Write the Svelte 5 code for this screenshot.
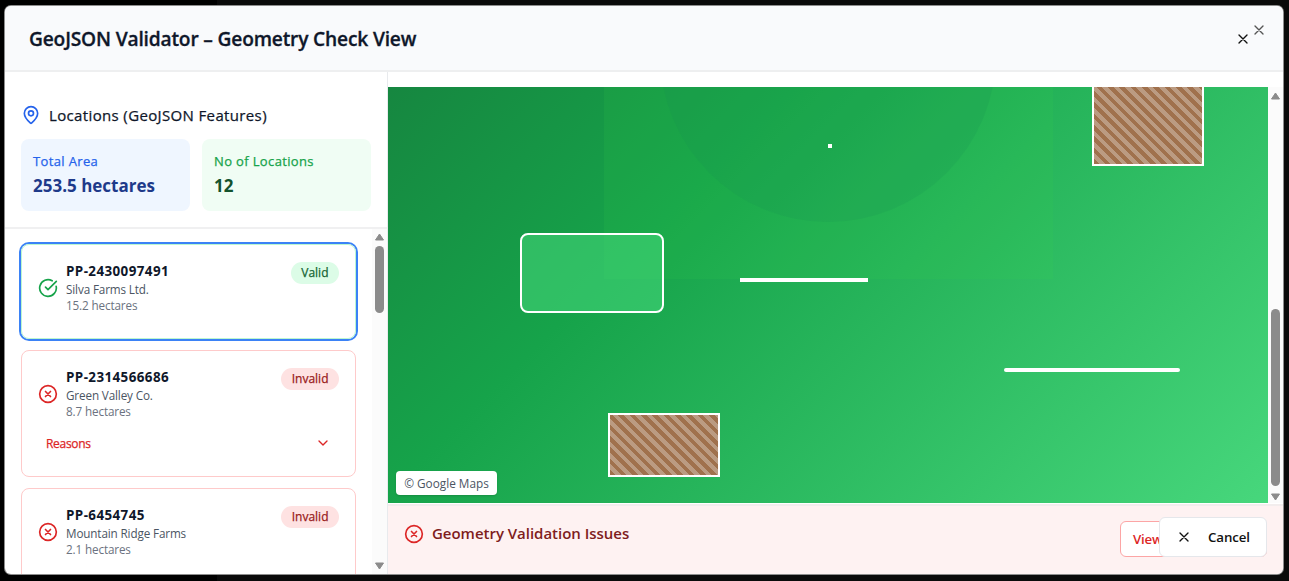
<script>
  const locations = [
    { id: 'PP-2430097491', owner: 'Silva Farms Ltd.', area: '15.2 hectares', valid: true, expandable: false },
    { id: 'PP-2314566686', owner: 'Green Valley Co.', area: '8.7 hectares', valid: false, expandable: true },
    { id: 'PP-6454745', owner: 'Mountain Ridge Farms', area: '2.1 hectares', valid: false, expandable: false }
  ];
</script>

{#snippet cross(size)}
  <svg class="icon" width={size} height={size} viewBox="0 0 24 24"><path d="M18 6 6 18M6 6l12 12" /></svg>
{/snippet}

{#snippet circleX()}
  <svg class="icon red" width="20" height="20" viewBox="0 0 24 24"><circle cx="12" cy="12" r="10" /><path d="m15 9-6 6M9 9l6 6" /></svg>
{/snippet}

{#snippet arrow(up)}
  <svg class="arrow" width="9" height="8" viewBox="0 0 9 8">
    {#if up}<path d="M4.5 1 8.5 7H.5Z" />{:else}<path d="M4.5 7 .5 1h8Z" />{/if}
  </svg>
{/snippet}

<div class="backdrop">
  <div class="dialog">
    <header>
      <h1>GeoJSON Validator – Geometry Check View</h1>
      <button class="plain close">{@render cross(16)}</button>
      <button class="plain dismiss">{@render cross(16)}</button>
    </header>
    <div class="body">
      <aside>
        <div class="summary">
          <h2>
            <svg class="icon blue" width="20" height="20" viewBox="0 0 24 24"><path d="M20 10c0 4.993-5.539 10.193-7.399 11.799a1 1 0 0 1-1.202 0C9.539 20.193 4 14.993 4 10a8 8 0 0 1 16 0" /><circle cx="12" cy="10" r="3" /></svg>
            <span>Locations (GeoJSON Features)</span>
          </h2>
          <div class="stats">
            <div class="stat area"><span class="label">Total Area</span><span class="value">253.5 hectares</span></div>
            <div class="stat count"><span class="label">No of Locations</span><span class="value">12</span></div>
          </div>
        </div>
        <div class="listwrap">
          <div class="list">
            {#each locations as loc, i}
              <div class="card" class:selected={i === 0} class:invalid={!loc.valid}>
                <div class="row">
                  <div class="status">
                    {#if loc.valid}
                      <svg class="icon green" width="20" height="20" viewBox="0 0 24 24"><path d="M21.801 10A10 10 0 1 1 17 3.335" /><path d="m9 11 3 3L22 4" /></svg>
                    {:else}
                      {@render circleX()}
                    {/if}
                  </div>
                  <div class="info">
                    <span class="id">{loc.id}</span>
                    <span class="owner">{loc.owner}</span>
                    <span class="size">{loc.area}</span>
                  </div>
                  <span class="badge" class:bad={!loc.valid}>{loc.valid ? 'Valid' : 'Invalid'}</span>
                </div>
                {#if loc.expandable}
                  <div class="reasons">
                    <span>Reasons</span>
                    <svg class="icon" width="16" height="16" viewBox="0 0 24 24"><path d="m6 9 6 6 6-6" /></svg>
                  </div>
                {/if}
              </div>
            {/each}
          </div>
          <div class="scroll left">{@render arrow(true)}<div class="thumb"></div>{@render arrow(false)}</div>
        </div>
      </aside>
      <main>
        <div class="mapwrap">
          <div class="viewport">
            <div class="map">
              <div class="square"></div>
              <div class="disc"></div>
              <div class="dot"></div>
              <div class="field"></div>
              <div class="line one"></div>
              <div class="line two"></div>
              <div class="soil a"></div>
              <div class="soil b"></div>
              <div class="credit">© Google Maps</div>
            </div>
          </div>
          <div class="scroll right">{@render arrow(true)}<div class="thumb"></div>{@render arrow(false)}</div>
        </div>
        <div class="issues">
          {@render circleX()}
          <span class="issuetitle">Geometry Validation Issues</span>
          <button class="view">View All</button>
          <button class="cancel">{@render cross(16)}<span>Cancel</span></button>
        </div>
      </main>
    </div>
  </div>
</div>

<style>
  :global(body) { background: #050505; overflow: hidden; }
  * { box-sizing: border-box; }
  .backdrop {
    width: 1289px; height: 581px; padding: 6px 5px 6px 5px;
    background: linear-gradient(90deg, #000 217px, #0a0a0a 217px);
    font-family: "Open Sans", "Noto Sans", sans-serif; color: #0f172a; overflow: hidden;
  }
  .dialog {
    width: 1278px; height: 568px; display: flex; flex-direction: column; overflow: hidden;
    background: #fff; border-radius: 6px; box-shadow: 0 0 0 1px #8d8d8d;
  }
  .icon { fill: none; stroke: currentColor; stroke-width: 2; stroke-linecap: round; stroke-linejoin: round; display: block; flex: none; }
  .red { color: #dc2626; }
  .blue { color: #2563eb; }
  .green { color: #16a34a; }
  h1, h2 { margin: 0; }
  button { font: inherit; margin: 0; padding: 0; }
  header {
    height: 66px; flex: none; display: flex; align-items: center; position: relative;
    padding: 1px 32px 0 24px; background: #f9fafc; border-bottom: 2px solid #eeeff0;
  }
  h1 { font-size: 19.2px; line-height: 28px; font-weight: 600; letter-spacing: -0.18px; flex: 1; white-space: nowrap; -webkit-text-stroke: 0.3px; }
  .plain { border: 0; background: none; color: #111; }
  .dismiss { position: absolute; top: 16px; right: 16px; color: #555; }
  .body { flex: 1; display: flex; min-height: 0; }
  aside { width: 383px; flex: none; display: flex; flex-direction: column; border-right: 1px solid #e8eaed; }
  .summary { height: 157px; flex: none; padding: 33px 16px 0; border-bottom: 2px solid #f0f0f1; }
  h2 { display: flex; align-items: center; gap: 8px; height: 20px; font-size: 15px; font-weight: 500; letter-spacing: 0.36px; white-space: nowrap; -webkit-text-stroke: 0.25px; }
  .stats { display: grid; grid-template-columns: 1fr 1fr; gap: 12px; margin-top: 14px; width: 350px; }
  .stat { height: 72px; border-radius: 8px; padding: 12px; display: flex; flex-direction: column; white-space: nowrap; }
  .label { font-size: 13px; line-height: 20px; font-weight: 500; letter-spacing: 0.36px; -webkit-text-stroke: 0.25px; }
  .value { font-size: 17px; line-height: 29px; font-weight: 700; letter-spacing: 0; }
  .area { background: #eff6ff; color: #2563eb; }
  .area .value { color: #1e3a8a; }
  .count { background: #f0fdf4; color: #16a34a; }
  .count .value { color: #14532d; }
  .listwrap { flex: 1; display: flex; min-height: 0; }
  .list { flex: 1; overflow: hidden; padding: 15px 16px 0; display: flex; flex-direction: column; gap: 11px; }
  .card { flex: none; height: 95px; border: 1px solid #bbf7d0; border-radius: 8px; padding: 16px; }
  .card.invalid { height: 127px; border-color: #fecaca; }
  .selected { box-shadow: 0 0 0 2px #3b82f6; }
  .row { display: flex; height: 53px; }
  .status { display: flex; align-items: center; width: 28px; }
  .info { flex: 1; display: flex; flex-direction: column; white-space: nowrap; }
  .id { font-size: 13.4px; line-height: 20px; font-weight: 700; letter-spacing: 0.41px; }
  .owner, .size { font-size: 11.7px; line-height: 16px; color: #4b5563; letter-spacing: -0.13px; }
  .size { color: #6b7280; }
  .badge { align-self: flex-start; height: 22px; line-height: 22px; border-radius: 11px; padding: 0 10.5px; background: #dcfce7; color: #166534; font-size: 12px; font-weight: 500; margin-top: 1px; -webkit-text-stroke: 0.25px; }
  .badge.bad { background: #fee2e2; color: #991b1b; }
  .reasons { display: flex; align-items: center; justify-content: space-between; height: 32px; margin-top: 7px; padding: 0 8px; color: #dc2626; font-size: 12px; font-weight: 500; letter-spacing: -0.3px; }
  .reasons span { -webkit-text-stroke: 0.25px; }
  .scroll { width: 15px; flex: none; display: flex; flex-direction: column; align-items: center; background: #fbfbfb; }
  .arrow { fill: #8b8b8b; stroke: #8b8b8b; stroke-linejoin: round; flex: none; display: block; }
  .thumb { width: 9px; border-radius: 5px; background: #8b8b8b; }
  .left { padding: 4px 0 4px; }
  .left .thumb { height: 67px; margin: 5px 0 auto; }
  main { flex: 1; display: flex; flex-direction: column; padding-top: 15px; min-width: 0; }
  .mapwrap { display: flex; height: 416px; flex: none; }
  .viewport { width: 880px; height: 416px; overflow: hidden; display: flex; align-items: flex-end; }
  .map { position: relative; flex: none; width: 880px; height: 898px; background: linear-gradient(135deg, #166534 0%, #16a34a 50%, #47d77c 100%); }
  .map > div { position: absolute; }
  .square { left: 216px; top: 225px; width: 449px; height: 449px; background: rgba(60, 215, 74, 0.12); }
  .disc { left: 272px; top: 281px; width: 336px; height: 336px; border-radius: 50%; background: rgba(22, 140, 84, 0.17); }
  .dot { left: 440px; top: 539px; width: 4px; height: 4px; background: #fff; }
  .field { left: 132px; top: 628px; width: 144px; height: 80px; border: 2px solid #fff; border-radius: 8px; background: rgba(74, 222, 128, 0.5); }
  .line { height: 4px; background: #fff; }
  .one { left: 352px; top: 673px; width: 128px; }
  .two { left: 616px; top: 763px; width: 176px; border-radius: 2px; }
  .soil { width: 112px; border: 2px solid #fff; background: repeating-linear-gradient(45deg, #a0714d 0 4px, #bb9b82 4px 8px); }
  .a { left: 704px; top: 465px; height: 96px; }
  .b { left: 220px; top: 808px; height: 64px; }
  .credit { left: 8px; bottom: 8px; height: 24px; width: 101px; border-radius: 4px; background: #fff; color: #4b5563; font-size: 11.8px; line-height: 25px; text-align: center; white-space: nowrap; box-shadow: 0 1px 2px rgba(0, 0, 0, 0.15); }
  .right { padding: 5px 0 2px; }
  .right .thumb { height: 177px; margin: auto 0 7px; }
  .issues { position: relative; flex: 1; display: flex; align-items: flex-start; margin-top: 1px; border-top: 2px solid #f2eded; background: #fef2f2; padding: 18px 16px 0; }
  .issuetitle { margin-left: 8px; margin-top: -1px; font-size: 15px; line-height: 20px; font-weight: 600; color: #7f1d1d; letter-spacing: -0.02px; }
  .view { margin: -3px 0 0 auto; width: 147px; height: 36px; border: 1px solid #fca5a5; border-radius: 6px; background: #fff; color: #dc2626; font-size: 13.3px; font-weight: 600; text-align: left; padding-left: 12px; letter-spacing: -0.2px; }
  .cancel { position: absolute; right: 16px; top: 11px; width: 108px; height: 40px; display: flex; align-items: center; padding: 0 16px; gap: 16px; border: 1px solid #e5e7eb; border-radius: 6px; background: #fff; color: #111; font-size: 13.3px; font-weight: 600; letter-spacing: -0.1px; }
</style>
